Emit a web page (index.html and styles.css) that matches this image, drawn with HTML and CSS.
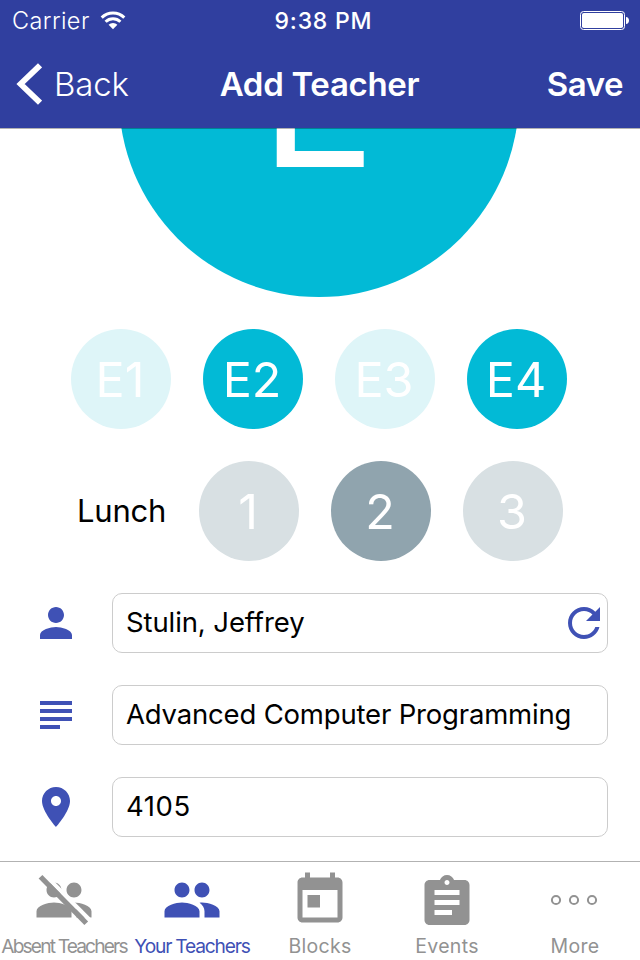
FILE: index.html
```html
<!DOCTYPE html>
<html lang="en">
<head>
<meta charset="utf-8">
<title>Add Teacher</title>
<link rel="stylesheet" href="styles.css">
</head>
<body>
<div class="screen">
  <header class="header">
    <div class="status">
      <div class="status-left">
        <span class="carrier">Carrier</span>
        <svg class="wifi" viewBox="0 0 26 19" width="26" height="19">
          <g fill="none" stroke="#fff" stroke-width="3">
            <path d="M1.7 6.6a16 16 0 0 1 22.6 0"/>
            <path d="M5.6 10.7a10.6 10.6 0 0 1 14.8 0"/>
          </g>
          <path fill="#fff" d="M13 18.2 8.6 13.8a6.3 6.3 0 0 1 8.8 0z"/>
        </svg>
      </div>
      <span class="time">9:38 PM</span>
      <div class="status-right">
        <svg viewBox="0 0 50 20" width="50" height="20">
          <rect x=".5" y=".5" width="44" height="18" rx="3" fill="none" stroke="#fff"/>
          <rect x="2" y="2" width="41" height="15" rx="1.8" fill="#fff"/>
          <path d="M46 6c1.9.2 3 1.6 3 3.500s-1.100 3.300-3 3.500z" fill="#fff"/>
        </svg>
      </div>
    </div>
    <nav class="nav">
      <div class="back">
        <svg viewBox="0 0 26 42" width="26" height="42"><path d="M24 2.300 4.600 21 24 39.700" fill="none" stroke="#fff" stroke-width="5.800"/></svg>
        <span>Back</span>
      </div>
      <h1 class="title">Add Teacher</h1>
      <span class="save">Save</span>
    </nav>
  </header>

  <main class="content">
    <div class="hero">E</div>
    <div class="blocks">
      <div class="circle cyan off">E1</div>
      <div class="circle cyan">E2</div>
      <div class="circle cyan off">E3</div>
      <div class="circle cyan">E4</div>
    </div>
    <div class="lunch">
      <span class="lunch-label">Lunch</span>
      <div class="circle gray off">1</div>
      <div class="circle gray">2</div>
      <div class="circle gray off">3</div>
    </div>
    <div class="fields">
      <div class="field">
        <svg class="icon" viewBox="0 0 24 24"><path d="M12 12c2.210 0 4-1.790 4-4s-1.790-4-4-4-4 1.790-4 4 1.790 4 4 4zm0 2c-2.670 0-8 1.340-8 4v2h16v-2c0-2.660-5.330-4-8-4z"/></svg>
        <div class="input"><span class="name">Stulin, Jeffrey</span>
          <svg class="icon" viewBox="0 0 24 24"><path d="M17.650 6.350C16.200 4.900 14.210 4 12 4c-4.420 0-7.990 3.580-7.990 8s3.570 8 7.990 8c3.730 0 6.840-2.550 7.730-6h-2.080c-.82 2.330-3.040 4-5.650 4-3.310 0-6-2.690-6-6s2.690-6 6-6c1.660 0 3.140.69 4.220 1.780L13 11h7V4l-2.350 2.350z"/></svg>
        </div>
      </div>
      <div class="field">
        <svg class="icon" viewBox="0 0 24 24"><path d="M14 17H4v2h10v-2zm6-8H4v2h16V9zM4 15h16v-2H4v2zM4 5v2h16V5H4z"/></svg>
        <div class="input"><span class="course">Advanced Computer Programming</span></div>
      </div>
      <div class="field">
        <svg class="icon" viewBox="0 0 24 24"><path d="M12 2C8.130 2 5 5.130 5 9c0 5.250 7 13 7 13s7-7.750 7-13c0-3.870-3.130-7-7-7zm0 9.500c-1.380 0-2.500-1.120-2.500-2.500s1.120-2.500 2.500-2.500 2.500 1.120 2.500 2.500-1.120 2.500-2.500 2.500z"/></svg>
        <div class="input"><span class="room">4105</span></div>
      </div>
    </div>
  </main>

  <footer class="tabs">
    <div class="tab">
      <svg viewBox="0 0 24 24"><path d="M16 11c1.660 0 2.990-1.340 2.990-3S17.660 5 16 5s-3 1.340-3 3 1.340 3 3 3zM8 11c1.660 0 2.990-1.340 2.990-3S9.660 5 8 5 5 6.340 5 8s1.340 3 3 3zM8 13c-2.330 0-7 1.170-7 3.500V19h14v-2.500C15 14.170 10.330 13 8 13zM16 13c-.29 0-.62.020-.97.050 1.160.84 1.970 1.970 1.970 3.450V19h6v-2.500c0-2.330-4.670-3.500-7-3.500z"/><path d="M4.600 2.200 23 20.700" fill="none" stroke="#fff" stroke-width="1.600"/><path d="M2.600 2.700 20.900 21.300" fill="none" stroke="#929292" stroke-width="2.100"/></svg>
      <span class="label absent">Absent Teachers</span>
    </div>
    <div class="tab active">
      <svg viewBox="0 0 24 24"><path d="M16 11c1.660 0 2.990-1.340 2.990-3S17.660 5 16 5s-3 1.340-3 3 1.340 3 3 3zM8 11c1.660 0 2.990-1.340 2.990-3S9.660 5 8 5 5 6.340 5 8s1.340 3 3 3zM8 13c-2.330 0-7 1.170-7 3.500V19h14v-2.500C15 14.170 10.330 13 8 13zM16 13c-.29 0-.62.020-.97.050 1.160.84 1.970 1.970 1.970 3.450V19h6v-2.500c0-2.330-4.670-3.500-7-3.500z"/></svg>
      <span class="label yours">Your Teachers</span>
    </div>
    <div class="tab">
      <svg viewBox="0 0 24 24"><path d="M19 3h-1V1h-2v2H8V1H6v2H5c-1.110 0-1.990.9-1.990 2L3 19c0 1.100.89 2 2 2h14c1.100 0 2-.9 2-2V5c0-1.100-.9-2-2-2zm0 16H5V8h14v11zM7 10h5v5H7z"/></svg>
      <span class="label">Blocks</span>
    </div>
    <div class="tab">
      <svg viewBox="0 -1 24 24"><path d="M19 3h-4.180C14.400 1.840 13.300 1 12 1c-1.300 0-2.400.84-2.820 2H5c-1.100 0-2 .9-2 2v14c0 1.100.9 2 2 2h14c1.100 0 2-.9 2-2V5c0-1.100-.9-2-2-2zm-7 0c.55 0 1 .45 1 1s-.45 1-1 1-1-.45-1-1 .45-1 1-1zm2 14H7v-2h7v2zm3-4H7v-2h10v2zm0-4H7V7h10v2z"/></svg>
      <span class="label">Events</span>
    </div>
    <div class="tab">
      <svg viewBox="0 0 60 60"><g fill="none" stroke="#929292" stroke-width="2"><circle cx="11" cy="30" r="4.100"/><circle cx="29" cy="30" r="4.100"/><circle cx="47" cy="30" r="4.100"/></g></svg>
      <span class="label">More</span>
    </div>
  </footer>
</div>
</body>
</html>
```
FILE: styles.css
```css
* { box-sizing: border-box; }
body {
  margin: 0;
  background: #fff;
  color: #000;
  font-family: Inter, "Liberation Sans", sans-serif;
}
svg { display: block; flex: none; }
.screen {
  width: 640px;
  height: 960px;
  display: flex;
  flex-direction: column;
  overflow: hidden;
  white-space: nowrap;
}
.header {
  height: 128px;
  flex: none;
  position: relative;
  z-index: 1;
  background: #303f9f;
  box-shadow: 0 1px 0 rgba(0, 0, 0, .3);
  color: #fff;
}
.status {
  height: 40px;
  display: grid;
  grid-template-columns: 1fr auto 1fr;
  align-items: center;
  padding: 1px 10px 0 12px;
  font-size: 23.5px;
}
.status-left { display: flex; align-items: center; gap: 10px; }
.status-right { display: flex; justify-content: flex-end; }
.carrier { font-weight: 350; letter-spacing: .4px; }
.time { margin-left: 5px; font-size: 23px; font-weight: 550; letter-spacing: .8px; }
.nav {
  height: 88px;
  display: grid;
  grid-template-columns: 1fr auto 1fr;
  align-items: center;
  padding: 0 17px 0 16px;
  font-size: 33px;
}
.back { display: flex; align-items: center; gap: 12px; font-weight: 350; letter-spacing: -.2px; }
.title { margin: 0; font-size: 33px; font-weight: 570; letter-spacing: -.3px; }
.save { justify-self: end; font-weight: 560; letter-spacing: -.5px; }

.content { height: 733px; flex: none; overflow: hidden; }
.hero {
  width: 400px;
  height: 400px;
  margin: -231px 0 0 119px;
  padding: 0 2px 2px 0;
  border-radius: 50%;
  background: #02bad6;
  color: #fff;
  display: flex;
  align-items: center;
  justify-content: center;
  font-size: 194px;
}
.blocks { display: flex; gap: 32px; margin: 32px 0 0 71px; }
.circle {
  width: 100px;
  height: 100px;
  flex: none;
  border-radius: 50%;
  display: flex;
  align-items: center;
  justify-content: center;
  padding-right: 2px;
  color: #fff;
  font-size: 48.5px;
  font-weight: 370;
}
.cyan { background: #02bad6; }
.cyan.off { background: #def5f8; }
.gray { background: #90a4ae; }
.gray.off { background: #d8e0e3; }
.lunch { display: flex; align-items: center; gap: 32px; margin: 32px 0 0 77px; }
.lunch-label { width: 90px; padding-bottom: 2px; font-size: 31px; letter-spacing: -.2px; }
.fields { display: flex; flex-direction: column; gap: 32px; margin: 32px 32px 0; }
.field { display: flex; align-items: center; gap: 32px; }
.icon { width: 48px; height: 48px; fill: #3f51b5; }
.input {
  flex: 1;
  height: 60px;
  border: 1px solid #ccc;
  border-radius: 10px;
  padding: 0 0 0 13px;
  display: flex;
  align-items: center;
  justify-content: space-between;
  font-size: 27.5px;
}
.input span { padding-bottom: 2px; }
.input .icon { margin-right: -1px; }
.name { letter-spacing: -.1px; }
.course { letter-spacing: -.18px; }
.room { letter-spacing: .6px; }

.tabs {
  height: 99px;
  flex: none;
  border-top: 1px solid #b2b2b2;
  display: grid;
  grid-template-columns: 128px 128px 128px 126px 130px;
  padding-top: 8px;
}
.tab { display: flex; flex-direction: column; align-items: center; fill: #929292; color: #929292; }
.tab svg { width: 60px; height: 60px; overflow: visible; }
.label { margin-top: 4px; font-size: 19.5px; line-height: 24px; letter-spacing: .3px; }
.active { fill: #3f51b5; color: #3f51b5; }
.absent { font-size: 19.2px; letter-spacing: -1.85px; }
.yours { font-size: 19.2px; letter-spacing: -1.2px; }
```
